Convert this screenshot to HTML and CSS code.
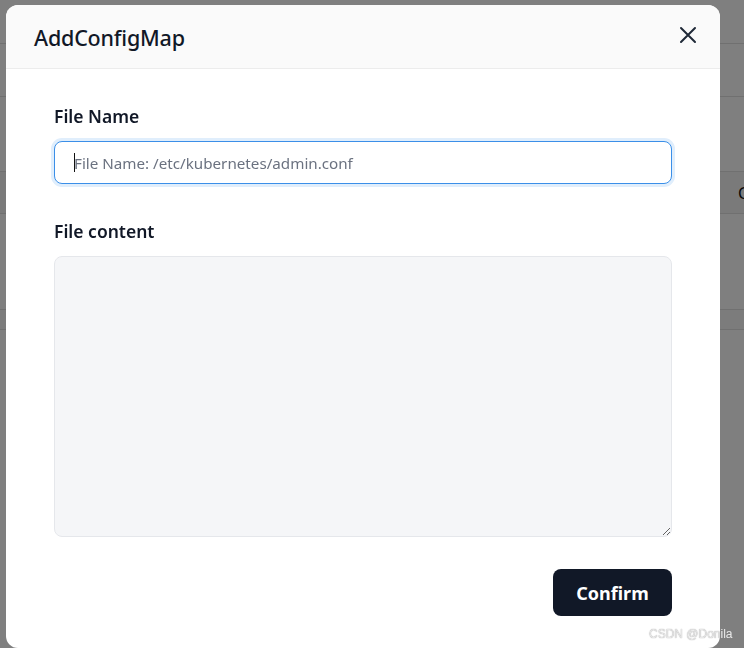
FILE: index.html
```html
<!DOCTYPE html>
<html lang="en">
<head>
<meta charset="utf-8">
<title>AddConfigMap</title>
<link rel="stylesheet" href="styles.css">
</head>
<body>
<div class="page">
  <div class="row r1"></div>
  <div class="row r2"></div>
  <div class="row r3"></div>
  <div class="row r4"><span class="cell-text">C</span></div>
  <div class="row r5"></div>
  <div class="row r6"></div>
  <div class="row r7"></div>
</div>
<div class="overlay"></div>
<div class="modal">
  <div class="modal-header">
    <h2 class="modal-title">AddConfigMap</h2>
    <button class="close-btn" aria-label="Close">
      <svg width="18" height="18" viewBox="0 0 18 18"><path d="M2 2 L16 16 M16 2 L2 16" stroke="#1f2937" stroke-width="2" stroke-linecap="round"/></svg>
    </button>
  </div>
  <div class="modal-body">
    <div class="field">
      <label class="field-label">File Name</label>
      <div class="input-wrap">
        <input class="text-input" type="text" placeholder="File Name: /etc/kubernetes/admin.conf">
        <span class="caret"></span>
      </div>
    </div>
    <div class="field">
      <label class="field-label">File content</label>
      <textarea class="text-area"></textarea>
    </div>
    <div class="actions">
      <button class="confirm-btn">Confirm</button>
    </div>
  </div>
</div>
<div class="watermark">CSDN @Donila</div>
</body>
</html>
```

FILE: styles.css
```css
* { box-sizing: border-box; }
html, body { margin: 0; padding: 0; }
body {
  width: 744px;
  height: 648px;
  overflow: hidden;
  background: #fff;
  font-family: "Noto Sans", "Open Sans", sans-serif;
}
.page {
  display: flex;
  flex-direction: column;
  height: 648px;
}
.row { border-bottom: 1px solid #e0e0e0; flex: none; position: relative; }
.r1 { height: 44px; background: #fff; }
.r2 { height: 53px; background: #fff; }
.r3 { height: 75px; background: #fff; }
.r4 { height: 42px; background: #f5f5f5; }
.r5 { height: 96px; background: #fff; }
.r6 { height: 20px; background: #f9f9f9; }
.r7 { flex: 1; border-bottom: none; background: #fff; }
.cell-text {
  position: absolute;
  left: 738px;
  top: 10px;
  font-size: 16px;
  color: #111;
}
.overlay {
  position: fixed;
  inset: 0;
  background: rgba(0, 0, 0, 0.5);
}
.modal {
  position: absolute;
  left: 6px;
  top: 5px;
  width: 714px;
  height: 643px;
  background: #fff;
  border-radius: 12px;
  overflow: hidden;
  display: flex;
  flex-direction: column;
}
.modal-header {
  height: 64px;
  flex: none;
  background: #fafafa;
  border-bottom: 1px solid #ececec;
  display: flex;
  align-items: center;
  justify-content: space-between;
  padding: 0 22px 0 28px;
}
.modal-title {
  margin: 0;
  font-size: 21.5px;
  font-weight: 500;
  color: #111827;
  letter-spacing: -0.2px;
  margin-top: 2px;
}
.close-btn {
  border: 0;
  background: transparent;
  padding: 0;
  width: 20px;
  height: 20px;
  display: flex;
  align-items: center;
  justify-content: center;
  margin-top: -4px;
}
.modal-body {
  padding: 35px 48px 32px 48px;
  display: flex;
  flex-direction: column;
}
.field {
  display: flex;
  flex-direction: column;
  gap: 13px;
  margin-bottom: 35px;
}
.field-label {
  font-size: 17.5px;
  font-weight: 600;
  color: #111827;
  line-height: 24px;
}
.input-wrap { position: relative; }
.text-input {
  width: 100%;
  height: 43px;
  border: 1px solid #3b8fe8;
  border-radius: 8px;
  box-shadow: 0 0 0 3px #e0eefc;
  padding: 0 19px;
  font-family: inherit;
  font-size: 15.2px;
  color: #111827;
  outline: none;
  background: #fff;
}
.text-input::placeholder { color: #6b7280; }
.caret {
  position: absolute;
  left: 20px;
  top: 12px;
  width: 1px;
  height: 19px;
  background: #111;
}
.text-area {
  width: 100%;
  height: 281px;
  border: 1px solid #e5e7eb;
  border-radius: 8px;
  background: #f5f6f8;
  font-family: inherit;
  font-size: 15px;
  resize: vertical;
  outline: none;
  display: block;
}
.actions {
  display: flex;
  justify-content: flex-end;
  margin-top: -3px;
}
.confirm-btn {
  width: 119px;
  height: 47px;
  border: 0;
  border-radius: 8px;
  background: #111827;
  color: #fff;
  font-family: inherit;
  font-size: 18px;
  font-weight: 700;
}
.watermark {
  position: absolute;
  left: 649px;
  top: 627px;
  font-family: "Liberation Sans", sans-serif;
  font-size: 12px;
  color: #e8e8e8;
  text-shadow: 0 0 1px #888;
}
```
